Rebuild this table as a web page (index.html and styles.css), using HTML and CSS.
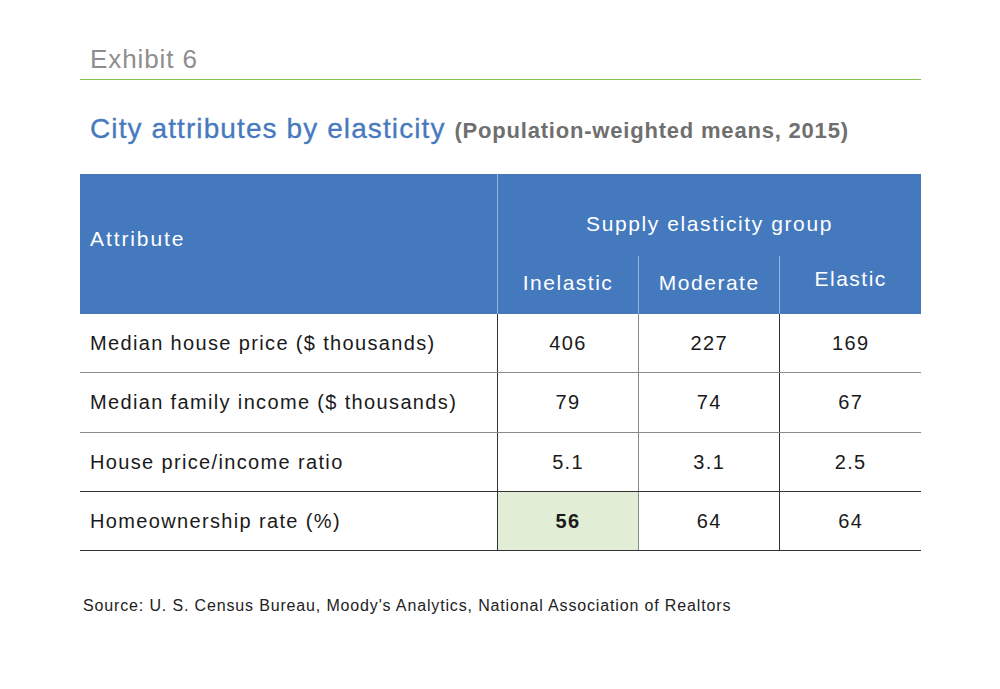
FILE: index.html
```html
<!DOCTYPE html>
<html lang="en">
<head>
<meta charset="utf-8">
<title>Exhibit 6</title>
<link rel="stylesheet" href="styles.css">
</head>
<body>
<main class="exhibit">
  <header class="exhibit-head">
    <div class="exhibit-label">Exhibit 6</div>
  </header>
  <h1 class="title">City attributes by elasticity <span class="subtitle">(Population-weighted means, 2015)</span></h1>
  <table class="data">
    <colgroup>
      <col class="c-attr">
      <col class="c-val">
      <col class="c-val">
      <col class="c-val">
    </colgroup>
    <thead>
      <tr class="hrow-top">
        <th class="attr" rowspan="2">Attribute</th>
        <th class="group" colspan="3">Supply elasticity group</th>
      </tr>
      <tr class="hrow-sub">
        <th class="sub">Inelastic</th>
        <th class="sub">Moderate</th>
        <th class="sub sub-up">Elastic</th>
      </tr>
    </thead>
    <tbody>
      <tr class="soft"><td class="name">Median house price ($ thousands)</td><td>406</td><td class="mid">227</td><td>169</td></tr>
      <tr class="soft tall"><td class="name">Median family income ($ thousands)</td><td>79</td><td class="mid">74</td><td>67</td></tr>
      <tr><td class="name">House price/income ratio</td><td>5.1</td><td class="mid">3.1</td><td>2.5</td></tr>
      <tr><td class="name">Homeownership rate (%)</td><td class="hl">56</td><td class="mid">64</td><td>64</td></tr>
    </tbody>
  </table>
  <p class="source">Source: U. S. Census Bureau, Moody's Analytics, National Association of Realtors</p>
</main>
</body>
</html>
```

FILE: styles.css
```css
html, body {
  margin: 0;
  padding: 0;
  background: #ffffff;
}
body {
  font-family: "Liberation Sans", Arial, Helvetica, sans-serif;
}
.exhibit {
  width: 841px;
  margin-left: 80px;
  padding-top: 43px;
}
.exhibit-head {
  border-bottom: 1px solid #84bf52;
  padding: 0 0 4px 10px;
}
.exhibit-label {
  font-size: 26px;
  line-height: 32px;
  color: #8e8e8e;
  letter-spacing: 0.9px;
}
.title {
  margin: 33px 0 0 10px;
  font-size: 28px;
  line-height: 32px;
  font-weight: normal;
  color: #4779be;
  letter-spacing: 1.1px;
  -webkit-text-stroke: 0.3px #4779be;
}
.subtitle {
  font-size: 22px;
  color: #6f6f6f;
  font-weight: bold;
  letter-spacing: 0.8px;
  -webkit-text-stroke: 0;
}
.data {
  margin-top: 27px;
  width: 841px;
  border-collapse: collapse;
  table-layout: fixed;
  font-size: 20px;
  letter-spacing: 1.35px;
  color: #1a1a1a;
}
.c-attr { width: 417px; }
.c-val { width: 141px; }
.data th {
  background: #4479bd;
  color: #ffffff;
  font-weight: normal;
  font-size: 21px;
  letter-spacing: 1.5px;
  padding: 0;
}
.data th.attr {
  text-align: left;
  padding: 0 0 11px 10px;
  letter-spacing: 1.9px;
  border-right: 1px solid #93b4e2;
}
.data th.group {
  height: 65px;
  padding-top: 17px;
  letter-spacing: 1.6px;
}
.data th.sub {
  height: 54px;
  padding-bottom: 4px;
  border-left: 1px solid #93b4e2;
}
.data th.sub:first-child { border-left: none; }
.data th.sub-up {
  height: 46px;
  padding-bottom: 12px;
}
.data td {
  height: 58px;
  padding: 0;
  text-align: center;
  border-bottom: 1px solid #333;
  border-left: 1px solid #333;
}
.data tr.tall td { height: 59px; }
.data tr.soft td { border-bottom-color: #8a8a8a; }
.data td.mid { border-left-color: #8a8a8a; }
.data td.name {
  text-align: left;
  padding-left: 10px;
  border-left: none;
}
.data td.hl {
  background: #e2edd6;
  font-weight: bold;
}
.source {
  margin: 46px 0 0 3px;
  font-size: 16px;
  color: #222;
  letter-spacing: 0.85px;
}
```
